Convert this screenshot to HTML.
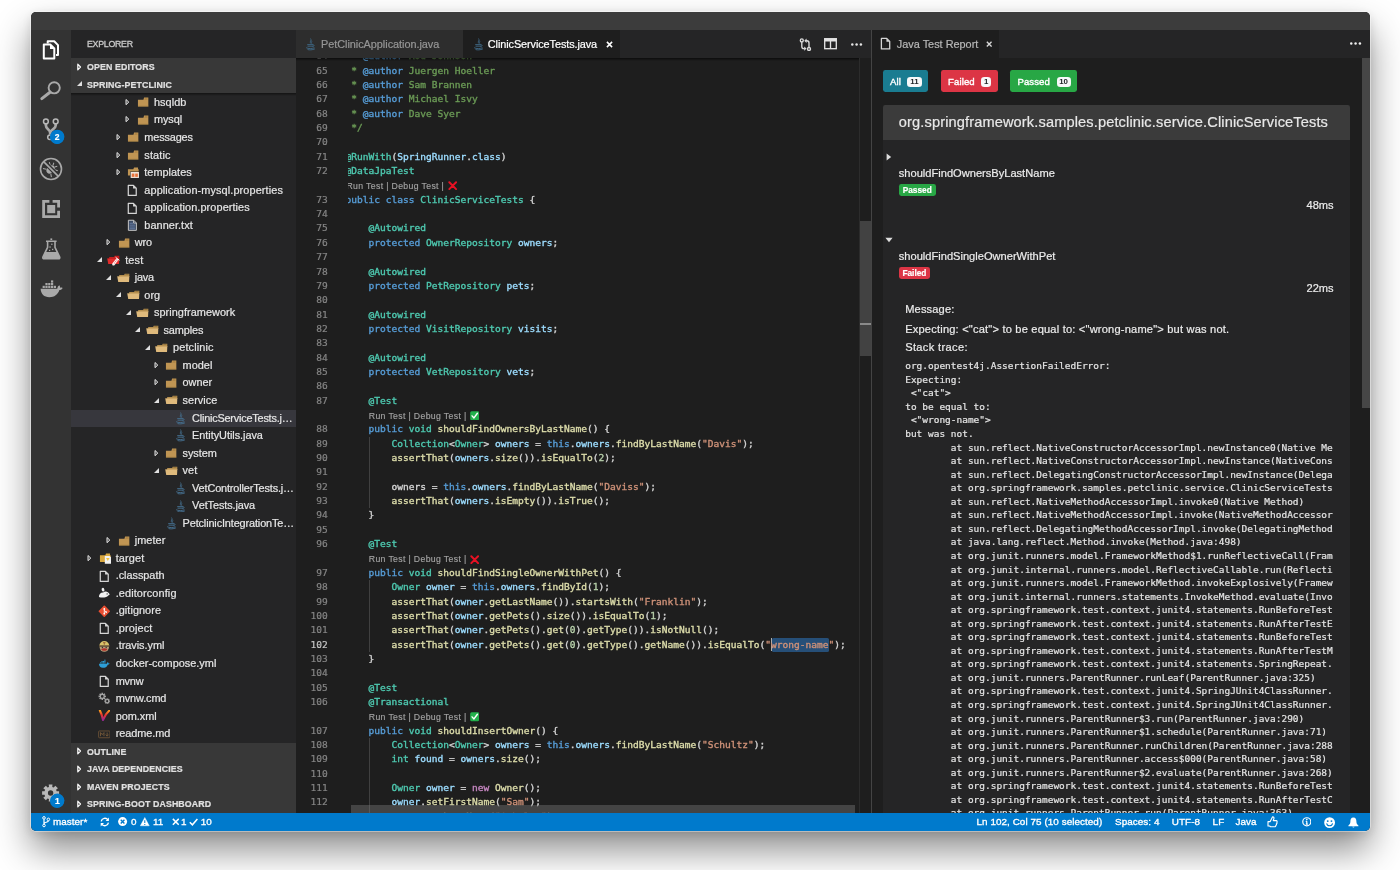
<!DOCTYPE html>
<html lang="en"><head><meta charset="utf-8"><title>spring-petclinic - Visual Studio Code</title>
<style>
*{box-sizing:border-box;margin:0;padding:0}
html,body{width:1400px;height:870px;overflow:hidden;background:#fff}
body{position:relative;font-family:"Liberation Sans",sans-serif;font-size:10.4px;color:#ccc}
.abs{position:absolute}
#all{position:absolute;left:0;top:0;width:1400px;height:870px;will-change:transform;-webkit-text-stroke:.2px}
#frame{position:absolute;left:31px;top:12px;width:1339px;height:819px;border-radius:5px;background:#1e1e1e;
 box-shadow:0 0 0 .8px rgba(255,255,255,.5),0 19px 36px rgba(0,0,0,.45),0 3px 12px rgba(0,0,0,.12)}
#title{position:absolute;left:31px;top:12px;width:1339px;height:18px;background:#3c3c3c;border-radius:5px 5px 0 0}
#act{position:absolute;left:31px;top:30px;width:40px;height:783px;background:#333}
#act svg{position:absolute}
.badge{position:absolute;width:14px;height:14px;border-radius:7px;background:#007acc;color:#fff;font-size:8.5px;font-weight:bold;text-align:center;line-height:14px}
#side{position:absolute;left:71px;top:30px;width:225px;height:783px;background:#252526;overflow:hidden}
#side .ttl{position:absolute;left:16px;top:0;height:28px;line-height:28.6px;font-size:8.8px;color:#cacaca;letter-spacing:-.27px;-webkit-text-stroke:.3px}
.sec{position:absolute;left:0;width:225px;height:17.6px;background:#383838;line-height:18.6px;font-size:8.8px;font-weight:bold;color:#e0e0e0;padding-left:16px;letter-spacing:.12px;white-space:nowrap}
.sec svg{position:absolute;left:4px;top:4.5px}
.row{position:absolute;left:0;width:225px;height:17.54px;line-height:17.54px;white-space:nowrap;color:#e6e6e6;font-size:10.9px;letter-spacing:.1px}
.row.sel{background:#37373d}
.row svg{position:absolute}
.row span{position:absolute;top:0}
#tabs{position:absolute;left:296px;top:30px;width:575px;height:28px;background:#252526}
#tabs svg{position:absolute}
.tab{position:absolute;top:0;height:28px;background:#2d2d2d;line-height:29.6px;font-size:10.9px;color:#969696;white-space:nowrap}
.tab.on{background:#1e1e1e;color:#fff}
.tab span{position:absolute;top:0}
#ed{position:absolute;left:296px;top:58px;width:575px;height:755px;background:#1e1e1e;overflow:hidden}
#code{-webkit-text-stroke:.36px;position:absolute;left:52px;top:0;width:511px;height:755px;overflow:hidden}
.ln,.num,.cl{position:absolute;height:14.35px;line-height:14.35px;white-space:pre}
.ln{left:0;width:560px;font-family:"DejaVu Sans Mono","Liberation Mono",monospace;font-size:9.56px;color:#d4d4d4}
.ln span{position:absolute;top:0}
.ln i,.cl i{font-style:normal}
.num{left:0;width:31.8px;text-align:right;font-family:"DejaVu Sans Mono","Liberation Mono",monospace;font-size:9.56px;color:#858585}
.num.nc{color:#c6c6c6}
.cl{font-family:"Liberation Sans",sans-serif;font-size:8.7px;color:#a2a2a2;letter-spacing:.35px;padding-top:.8px;-webkit-text-stroke:.15px}
.cli{position:relative;top:1.6px;margin-left:.6px}
.k{color:#569cd6}.t{color:#4ec9b0}.v{color:#9cdcfe}.f{color:#dcdcaa}.s{color:#ce9178}.n{color:#b5cea8}.c{color:#6a9955}.d{color:#569cd6}.p{color:#c586c0}
.selr{position:absolute;top:0;height:14.35px;background:#264f78;border-radius:1.6px}
.cur{position:absolute;top:.6px;width:1.4px;height:13.2px;background:#aeafad}
.ig{position:absolute;top:0;width:1px;height:14.35px;background:#404040}
#rtabs{position:absolute;left:872px;top:30px;width:498px;height:28px;background:#252526}
#rtabs svg{position:absolute}
#rp{position:absolute;left:872px;top:58px;width:498px;height:755px;background:#1e1e1e;overflow:hidden;color:#ececec;font-size:11.1px}
.btn{position:absolute;top:12px;height:22px;border-radius:2.4px;color:#fff;font-size:9.55px;line-height:23.4px;white-space:nowrap;letter-spacing:.1px}
.btn .bl{position:absolute;left:7.1px;top:0;-webkit-text-stroke:.38px}
.btn .bb{position:absolute;right:6.8px;top:7px;height:9.6px;line-height:9.8px;border-radius:3.3px;background:#f8f9fa;color:#212529;font-size:7.9px;font-weight:bold;-webkit-text-stroke:0;text-align:center;letter-spacing:0}
#card{position:absolute;left:11px;top:46.8px;width:467px;height:720px;background:#252526;border-radius:2.4px}
#chead{position:absolute;left:0;top:0;width:467px;height:35px;background:#3b3b3b;border-radius:2.4px 2.4px 0 0;line-height:35px;font-size:14.6px;color:#e8e8e8;white-space:nowrap;letter-spacing:.13px}
#chead span{position:absolute;left:15.8px;top:0}
.tn,.msg,.ms{position:absolute;height:16px;line-height:16px;white-space:nowrap}
.tn{left:26.8px}
.tb{position:absolute;left:26.8px;height:12.6px;line-height:12.8px;border-radius:2.4px;color:#fff;font-size:8.3px;font-weight:bold;text-align:center}
.ms{right:36.4px;text-align:right;margin-top:-.6px}
.msg{left:33.2px;letter-spacing:.15px}
#st{position:absolute;left:33.2px;top:301.3px;width:427.8px;height:460px;overflow:hidden;font-family:"DejaVu Sans Mono","Liberation Mono",monospace;font-size:9.47px;line-height:13.55px;color:#e4e4e4;white-space:pre}
#status{-webkit-text-stroke:.32px;position:absolute;left:31px;top:813px;width:1339px;height:18px;background:#007acc;border-radius:0 0 5px 5px;color:#fff;font-size:9.9px;line-height:18px;white-space:nowrap;letter-spacing:.06px}
#status span{position:absolute;top:0}
#status svg{position:absolute}

</style></head>
<body>
<div id="all">
<div id="frame"></div>
<div id="title"></div>
<div id="act"><svg style="left:0;top:0" width="40" height="783" viewBox="31 30 40 783"><g fill="none" stroke="#fff" stroke-width="2" stroke-linejoin="round"><path d="M47.7 43.4 V41.3 H54.2 L58 45.1 V55 H56"/><path d="M43.8 44.6 H50.5 L54.3 48.4 V58.5 H43.8 Z"/></g><path d="M50 44.2 L54.700 48.900 H50Z" fill="#fff"/><g fill="none" stroke="#a9a9a9"><circle cx="54.2" cy="87.8" r="5.6" stroke-width="1.9"/><path d="M50 92.2 L41.8 98.6" stroke-width="3" stroke-linecap="round"/></g><path d="M45.9 123.6 V125.6 C45.9 129.4 50.2 129.2 50.2 133 V134.6 M55.7 123.6 V125.6 C55.7 129.4 50.2 129.2 50.2 133" fill="none" stroke="#a9a9a9" stroke-width="2.7"/><g fill="#333" stroke="#b8b8b8" stroke-width="1.5"><circle cx="45.9" cy="121.4" r="2.4"/><circle cx="55.7" cy="121.4" r="2.4"/><circle cx="50" cy="137.2" r="2.3"/></g><circle cx="57.3" cy="136.8" r="7.1" fill="#007acc"/><g transform="rotate(45 51 169)"><ellipse cx="51" cy="169.6" rx="3.3" ry="4.7" fill="#a9a9a9"/><path d="M47.9 167 L45 165.4 M47.6 169.8 H44.2 M47.9 172.4 L45 174.4 M54.1 167 L57 165.4 M54.4 169.8 H57.8 M54.1 172.4 L57 174.4 M49.8 165 L48.6 162.6 M52.2 165 L53.4 162.6" fill="none" stroke="#a9a9a9" stroke-width="1.05"/></g><path d="M44.2 162 L58.200 176" stroke="#333" stroke-width="4.2"/><g fill="none" stroke="#a9a9a9"><circle cx="51" cy="169" r="10.5" stroke-width="1.6"/><path d="M43.600 161.600 L58.400 176.400" stroke-width="1.6"/></g><g fill="#a9a9a9"><path d="M42.2 200 H49.4 V202.8 H45 V215.2 H57.2 V210.8 H60 V218 H42.2 Z"/><path d="M52.6 200 H60 V207.6 H57.2 V202.8 H52.6 Z"/><rect x="47.2" y="205" width="8" height="8.2"/></g><g><path d="M46 241.2 H56.6 M47.6 241.2 V247.4 L43 256.8 Q42.2 258.8 44.4 258.8 H58.2 Q60.4 258.8 59.6 256.8 L55 247.4 V241.2" fill="none" stroke="#a9a9a9" stroke-width="1.6" stroke-linejoin="round"/><path d="M45.2 252 H57.4 L59.4 256.8 Q59.8 258.6 58.2 258.6 H44.4 Q42.8 258.6 43.2 256.8 Z" fill="#a9a9a9"/><rect x="50.4" y="238.4" width="1.8" height="1.6" fill="#a9a9a9"/><rect x="51.2" y="243.6" width="1.3" height="1.3" fill="#a9a9a9"/><rect x="49.4" y="246.4" width="1.3" height="1.3" fill="#a9a9a9"/><rect x="52" y="248.8" width="1.3" height="1.3" fill="#a9a9a9"/><rect x="49" y="249.8" width="1.2" height="1.2" fill="#a9a9a9"/></g><g fill="#a9a9a9"><path d="M40.6 288.8 H57.2 C57.6 286.6 58.6 285.6 59.4 285.2 C60 286 60.2 287 60 287.8 C61 287.4 62 287.6 62.6 288 C62 289.4 60.8 290 59.4 290 C57.8 294.6 54.4 297.2 49.4 297.2 C44 297.2 41 294.2 40.6 288.8 Z"/><rect x="42.6" y="285.8" width="2.2" height="2.2"/><rect x="45.4" y="285.8" width="2.2" height="2.2"/><rect x="48.2" y="285.8" width="2.2" height="2.2"/><rect x="51" y="285.8" width="2.2" height="2.2"/><rect x="53.8" y="285.8" width="2.2" height="2.2"/><rect x="45.4" y="283" width="2.2" height="2.2"/><rect x="48.2" y="283" width="2.2" height="2.2"/><rect x="51" y="283" width="2.2" height="2.2"/><rect x="51" y="280.4" width="2.2" height="2.2"/></g><path d="M59.10 791.14 L59.10 794.86 L56.68 794.64 L56.06 796.14 L57.93 797.69 L55.29 800.33 L53.74 798.46 L52.24 799.08 L52.46 801.50 L48.74 801.50 L48.96 799.08 L47.46 798.46 L45.91 800.33 L43.27 797.69 L45.14 796.14 L44.52 794.64 L42.10 794.86 L42.10 791.14 L44.52 791.36 L45.14 789.86 L43.27 788.31 L45.91 785.67 L47.46 787.54 L48.96 786.92 L48.74 784.50 L52.46 784.50 L52.24 786.92 L53.74 787.54 L55.29 785.67 L57.93 788.31 L56.06 789.86 L56.68 791.36Z M53.30 793.00 A2.7 2.7 0 1 0 47.90 793.00 A2.7 2.7 0 1 0 53.30 793.00Z" fill="#b9b9b9" fill-rule="evenodd"/><circle cx="57.4" cy="800.6" r="7" fill="#007acc"/></svg><div class="badge" style="left:19.2px;top:99.8px">2</div><div class="badge" style="left:19.4px;top:763.6px">1</div></div>
<div id="side"><div class="ttl">EXPLORER</div><div class="sec" style="top:28.00px"><svg style="left:5.6px;top:4.6px" width="6" height="8" viewBox="0 0 6 8"><path d="M.8 1.1 L3.5 4 L.8 6.9 Z" fill="none" stroke="#f6f6f6" stroke-width="1.25" stroke-linejoin="round"/></svg>OPEN EDITORS</div><div class="sec" style="top:45.54px"><svg style="left:4.8px;top:4.6px" width="7" height="7" viewBox="0 0 7 7"><path d="M6 1 V6 H1 Z" fill="#e0e0e0"/></svg>SPRING-PETCLINIC</div><div class="row" style="top:63.90px"><svg style="left:54.4px;top:4.0px" width="6" height="8" viewBox="0 0 6 8"><path d="M1 1.5 L3.800 4.100 L1 6.700 Z" fill="rgba(255,255,255,.18)" stroke="#e4e4e4" stroke-width="1" stroke-linejoin="round"/></svg><svg style="left:65.7px;top:2.4px" width="12.6" height="12.6" viewBox="0 0 16 16"><path d="M1.2 13.2 V4.8 H8.2 L9 2 H14.4 V13.2 Z" fill="#c09553"/><path d="M9.4 4.6 L9.9 3.1 H13.4 V4.6Z" fill="#a07a3c"/><path d="M1.2 12.4 H14.4 V13.2 H1.2Z" fill="#a98445"/></svg><span style="left:82.9px;letter-spacing:0.08px">hsqldb</span></div><div class="row" style="top:81.44px"><svg style="left:54.4px;top:4.0px" width="6" height="8" viewBox="0 0 6 8"><path d="M1 1.5 L3.800 4.100 L1 6.700 Z" fill="rgba(255,255,255,.18)" stroke="#e4e4e4" stroke-width="1" stroke-linejoin="round"/></svg><svg style="left:65.7px;top:2.4px" width="12.6" height="12.6" viewBox="0 0 16 16"><path d="M1.2 13.2 V4.8 H8.2 L9 2 H14.4 V13.2 Z" fill="#c09553"/><path d="M9.4 4.6 L9.9 3.1 H13.4 V4.6Z" fill="#a07a3c"/><path d="M1.2 12.4 H14.4 V13.2 H1.2Z" fill="#a98445"/></svg><span style="left:82.9px;letter-spacing:-0.05px">mysql</span></div><div class="row" style="top:98.97px"><svg style="left:44.8px;top:4.0px" width="6" height="8" viewBox="0 0 6 8"><path d="M1 1.5 L3.800 4.100 L1 6.700 Z" fill="rgba(255,255,255,.18)" stroke="#e4e4e4" stroke-width="1" stroke-linejoin="round"/></svg><svg style="left:56.1px;top:2.4px" width="12.6" height="12.6" viewBox="0 0 16 16"><path d="M1.2 13.2 V4.8 H8.2 L9 2 H14.4 V13.2 Z" fill="#c09553"/><path d="M9.4 4.6 L9.9 3.1 H13.4 V4.6Z" fill="#a07a3c"/><path d="M1.2 12.4 H14.4 V13.2 H1.2Z" fill="#a98445"/></svg><span style="left:73.3px;letter-spacing:-0.14px">messages</span></div><div class="row" style="top:116.50px"><svg style="left:44.8px;top:4.0px" width="6" height="8" viewBox="0 0 6 8"><path d="M1 1.5 L3.800 4.100 L1 6.700 Z" fill="rgba(255,255,255,.18)" stroke="#e4e4e4" stroke-width="1" stroke-linejoin="round"/></svg><svg style="left:56.1px;top:2.4px" width="12.6" height="12.6" viewBox="0 0 16 16"><path d="M1.2 13.2 V4.8 H8.2 L9 2 H14.4 V13.2 Z" fill="#c09553"/><path d="M9.4 4.6 L9.9 3.1 H13.4 V4.6Z" fill="#a07a3c"/><path d="M1.2 12.4 H14.4 V13.2 H1.2Z" fill="#a98445"/></svg><span style="left:73.3px;letter-spacing:0.16px">static</span></div><div class="row" style="top:134.04px"><svg style="left:44.8px;top:4.0px" width="6" height="8" viewBox="0 0 6 8"><path d="M1 1.5 L3.800 4.100 L1 6.700 Z" fill="rgba(255,255,255,.18)" stroke="#e4e4e4" stroke-width="1" stroke-linejoin="round"/></svg><svg style="left:56.1px;top:2.4px" width="12.6" height="12.6" viewBox="0 0 16 16"><path d="M1.2 12 V4 H8 L9 2 H14 V4 H14.8 V7 H4 V12 Z" fill="#c09553"/><rect x="4.6" y="7.6" width="10.6" height="7.6" fill="#f0e6dc"/><rect x="6" y="9.6" width="3.4" height="4.2" fill="#e8743b"/><rect x="10.4" y="9.6" width="3.4" height="4.2" fill="#e8743b"/></svg><span style="left:73.3px;letter-spacing:0.02px">templates</span></div><div class="row" style="top:151.57px"><svg style="left:55.2px;top:2.4px" width="12.6" height="12.6" viewBox="0 0 16 16"><path d="M2.9 1.7 H9.4 L13 5.3 V14.5 H2.9 Z" fill="none" stroke="#d6d6d6" stroke-width="1.55" stroke-linejoin="round"/><path d="M9 1.6 L13.2 5.8 H9Z" fill="#d6d6d6"/></svg><span style="left:73.3px;letter-spacing:0.11px">application-mysql.properties</span></div><div class="row" style="top:169.11px"><svg style="left:55.2px;top:2.4px" width="12.6" height="12.6" viewBox="0 0 16 16"><path d="M2.9 1.7 H9.4 L13 5.3 V14.5 H2.9 Z" fill="none" stroke="#d6d6d6" stroke-width="1.55" stroke-linejoin="round"/><path d="M9 1.6 L13.2 5.8 H9Z" fill="#d6d6d6"/></svg><span style="left:73.3px;letter-spacing:0.09px">application.properties</span></div><div class="row" style="top:186.65px"><svg style="left:55.2px;top:2.4px" width="12.6" height="12.6" viewBox="0 0 16 16"><path d="M3 1.6 H9.8 L13.2 5 V14.4 H3 Z" fill="#3b4a63" stroke="#c8c8c8" stroke-width="1.25" stroke-linejoin="round"/><path d="M4.6 5.4 H9 M4.6 7.8 H11.4 M4.6 10.2 H11.4 M4.6 12.4 H11.4" stroke="#6e84ad" stroke-width="1.1"/><path d="M9.6 1.8 V5.2 H13" fill="none" stroke="#c8c8c8" stroke-width="1.1"/></svg><span style="left:73.3px;letter-spacing:0.07px">banner.txt</span></div><div class="row" style="top:204.18px"><svg style="left:35.3px;top:4.0px" width="6" height="8" viewBox="0 0 6 8"><path d="M1 1.5 L3.800 4.100 L1 6.700 Z" fill="rgba(255,255,255,.18)" stroke="#e4e4e4" stroke-width="1" stroke-linejoin="round"/></svg><svg style="left:46.6px;top:2.4px" width="12.6" height="12.6" viewBox="0 0 16 16"><path d="M1.2 13.2 V4.8 H8.2 L9 2 H14.4 V13.2 Z" fill="#c09553"/><path d="M9.4 4.6 L9.9 3.1 H13.4 V4.6Z" fill="#a07a3c"/><path d="M1.2 12.4 H14.4 V13.2 H1.2Z" fill="#a98445"/></svg><span style="left:63.8px;letter-spacing:-0.11px">wro</span></div><div class="row" style="top:221.72px"><svg style="left:24.8px;top:4.6px" width="7" height="7" viewBox="0 0 7 7"><path d="M6 1 V6 H1 Z" fill="#e0e0e0"/></svg><svg width="14.2" height="12.6" viewBox="-2 0 18 16" style="left:37.0px;top:2.4px;margin-left:-1.6px"><path d="M2 6.4 V3.9 H8.4 L9 2.2 H14.9 V6.4Z" fill="#c41f1f"/><path d="M-.4 5.8 H14.9 L14.5 12.7 H.8Z" fill="#e22b2b"/><path d="M-.4 5.8 H14.9 V6.5 H-.3Z" fill="#b81c1c"/><path d="M6 12.2 L11.4 5.4 L14 7.4 L8.8 14.2 Q7.200 15 6.200 14.2 Q5.400 13.200 6 12.2Z" fill="#fff" opacity=".93"/><path d="M10.200 4.200 L15 8" stroke="#fff" stroke-width="1.2"/><path d="M8.200 11 L9.800 12.2 M9.600 9.200 L11.200 10.4 M11 7.400 L12.600 8.600" stroke="#e22b2b" stroke-width=".7"/></svg><span style="left:54.2px;letter-spacing:0.15px">test</span></div><div class="row" style="top:239.25px"><svg style="left:34.4px;top:4.6px" width="7" height="7" viewBox="0 0 7 7"><path d="M6 1 V6 H1 Z" fill="#e0e0e0"/></svg><svg width="14.2" height="12.6" viewBox="-2 0 18 16" style="left:46.6px;top:2.4px;margin-left:-1.6px"><path d="M2 6.4 V3.9 H8.4 L9 2.2 H14.9 V6.4Z" fill="#b58f4f"/><path d="M9.6 3.9 L10 3 H14 V3.9Z" fill="#8f6f38"/><path d="M-.4 5.8 H14.9 L14.5 12.7 H.8Z" fill="#dfba7c"/><path d="M-.4 5.8 H14.9 V6.5 H-.3Z" fill="#c9a466"/></svg><span style="left:63.8px;letter-spacing:-0.25px">java</span></div><div class="row" style="top:256.78px"><svg style="left:43.9px;top:4.6px" width="7" height="7" viewBox="0 0 7 7"><path d="M6 1 V6 H1 Z" fill="#e0e0e0"/></svg><svg width="14.2" height="12.6" viewBox="-2 0 18 16" style="left:56.1px;top:2.4px;margin-left:-1.6px"><path d="M2 6.4 V3.9 H8.4 L9 2.2 H14.9 V6.4Z" fill="#b58f4f"/><path d="M9.6 3.9 L10 3 H14 V3.9Z" fill="#8f6f38"/><path d="M-.4 5.8 H14.9 L14.5 12.7 H.8Z" fill="#dfba7c"/><path d="M-.4 5.8 H14.9 V6.5 H-.3Z" fill="#c9a466"/></svg><span style="left:73.3px;letter-spacing:0.07px">org</span></div><div class="row" style="top:274.32px"><svg style="left:53.5px;top:4.6px" width="7" height="7" viewBox="0 0 7 7"><path d="M6 1 V6 H1 Z" fill="#e0e0e0"/></svg><svg width="14.2" height="12.6" viewBox="-2 0 18 16" style="left:65.7px;top:2.4px;margin-left:-1.6px"><path d="M2 6.4 V3.9 H8.4 L9 2.2 H14.9 V6.4Z" fill="#b58f4f"/><path d="M9.6 3.9 L10 3 H14 V3.9Z" fill="#8f6f38"/><path d="M-.4 5.8 H14.9 L14.5 12.7 H.8Z" fill="#dfba7c"/><path d="M-.4 5.8 H14.9 V6.5 H-.3Z" fill="#c9a466"/></svg><span style="left:82.9px;letter-spacing:0.06px">springframework</span></div><div class="row" style="top:291.86px"><svg style="left:63.1px;top:4.6px" width="7" height="7" viewBox="0 0 7 7"><path d="M6 1 V6 H1 Z" fill="#e0e0e0"/></svg><svg width="14.2" height="12.6" viewBox="-2 0 18 16" style="left:75.3px;top:2.4px;margin-left:-1.6px"><path d="M2 6.4 V3.9 H8.4 L9 2.2 H14.9 V6.4Z" fill="#b58f4f"/><path d="M9.6 3.9 L10 3 H14 V3.9Z" fill="#8f6f38"/><path d="M-.4 5.8 H14.9 L14.5 12.7 H.8Z" fill="#dfba7c"/><path d="M-.4 5.8 H14.9 V6.5 H-.3Z" fill="#c9a466"/></svg><span style="left:92.5px;letter-spacing:-0.09px">samples</span></div><div class="row" style="top:309.39px"><svg style="left:72.6px;top:4.6px" width="7" height="7" viewBox="0 0 7 7"><path d="M6 1 V6 H1 Z" fill="#e0e0e0"/></svg><svg width="14.2" height="12.6" viewBox="-2 0 18 16" style="left:84.8px;top:2.4px;margin-left:-1.6px"><path d="M2 6.4 V3.9 H8.4 L9 2.2 H14.9 V6.4Z" fill="#b58f4f"/><path d="M9.6 3.9 L10 3 H14 V3.9Z" fill="#8f6f38"/><path d="M-.4 5.8 H14.9 L14.5 12.7 H.8Z" fill="#dfba7c"/><path d="M-.4 5.8 H14.9 V6.5 H-.3Z" fill="#c9a466"/></svg><span style="left:102.0px;letter-spacing:0.14px">petclinic</span></div><div class="row" style="top:326.92px"><svg style="left:83.1px;top:4.0px" width="6" height="8" viewBox="0 0 6 8"><path d="M1 1.5 L3.800 4.100 L1 6.700 Z" fill="rgba(255,255,255,.18)" stroke="#e4e4e4" stroke-width="1" stroke-linejoin="round"/></svg><svg style="left:94.4px;top:2.4px" width="12.6" height="12.6" viewBox="0 0 16 16"><path d="M1.2 13.2 V4.8 H8.2 L9 2 H14.4 V13.2 Z" fill="#c09553"/><path d="M9.4 4.6 L9.9 3.1 H13.4 V4.6Z" fill="#a07a3c"/><path d="M1.2 12.4 H14.4 V13.2 H1.2Z" fill="#a98445"/></svg><span style="left:111.6px;letter-spacing:0.03px">model</span></div><div class="row" style="top:344.46px"><svg style="left:83.1px;top:4.0px" width="6" height="8" viewBox="0 0 6 8"><path d="M1 1.5 L3.800 4.100 L1 6.700 Z" fill="rgba(255,255,255,.18)" stroke="#e4e4e4" stroke-width="1" stroke-linejoin="round"/></svg><svg style="left:94.4px;top:2.4px" width="12.6" height="12.6" viewBox="0 0 16 16"><path d="M1.2 13.2 V4.8 H8.2 L9 2 H14.4 V13.2 Z" fill="#c09553"/><path d="M9.4 4.6 L9.9 3.1 H13.4 V4.6Z" fill="#a07a3c"/><path d="M1.2 12.4 H14.4 V13.2 H1.2Z" fill="#a98445"/></svg><span style="left:111.6px;letter-spacing:-0.05px">owner</span></div><div class="row" style="top:362.00px"><svg style="left:82.2px;top:4.6px" width="7" height="7" viewBox="0 0 7 7"><path d="M6 1 V6 H1 Z" fill="#e0e0e0"/></svg><svg width="14.2" height="12.6" viewBox="-2 0 18 16" style="left:94.4px;top:2.4px;margin-left:-1.6px"><path d="M2 6.4 V3.9 H8.4 L9 2.2 H14.9 V6.4Z" fill="#b58f4f"/><path d="M9.6 3.9 L10 3 H14 V3.9Z" fill="#8f6f38"/><path d="M-.4 5.8 H14.9 L14.5 12.7 H.8Z" fill="#dfba7c"/><path d="M-.4 5.8 H14.9 V6.5 H-.3Z" fill="#c9a466"/></svg><span style="left:111.6px;letter-spacing:0.02px">service</span></div><div class="row sel" style="top:379.53px"><svg style="left:103.0px;top:2.4px" width="12.6" height="12.6" viewBox="0 0 16 16"><g fill="none" stroke="#456f8e" stroke-linecap="round"><path d="M8.6 1 C10.4 3 6.4 4.4 8.2 6.6 M9.8 3.6 C10.6 4.8 8.8 5.4 9.6 6.8" stroke-width="1.0"/><path d="M4.6 8.4 H11.4 M5 10.4 H11 M11.6 8.8 C13.6 8.6 13.2 10.8 11.2 11" stroke-width="1.2"/><path d="M3.2 12.6 C5 13.8 11 13.8 12.8 12.6 M5 14.8 C7 15.4 10.4 15.2 13.4 14" stroke-width="1.2"/></g></svg><span style="left:121.1px;letter-spacing:-0.21px">ClinicServiceTests.j…</span></div><div class="row" style="top:397.06px"><svg style="left:103.0px;top:2.4px" width="12.6" height="12.6" viewBox="0 0 16 16"><g fill="none" stroke="#456f8e" stroke-linecap="round"><path d="M8.6 1 C10.4 3 6.4 4.4 8.2 6.6 M9.8 3.6 C10.6 4.8 8.8 5.4 9.6 6.8" stroke-width="1.0"/><path d="M4.6 8.4 H11.4 M5 10.4 H11 M11.6 8.8 C13.6 8.6 13.2 10.8 11.2 11" stroke-width="1.2"/><path d="M3.2 12.6 C5 13.8 11 13.8 12.8 12.6 M5 14.8 C7 15.4 10.4 15.2 13.4 14" stroke-width="1.2"/></g></svg><span style="left:121.1px;letter-spacing:-0.04px">EntityUtils.java</span></div><div class="row" style="top:414.60px"><svg style="left:83.1px;top:4.0px" width="6" height="8" viewBox="0 0 6 8"><path d="M1 1.5 L3.800 4.100 L1 6.700 Z" fill="rgba(255,255,255,.18)" stroke="#e4e4e4" stroke-width="1" stroke-linejoin="round"/></svg><svg style="left:94.4px;top:2.4px" width="12.6" height="12.6" viewBox="0 0 16 16"><path d="M1.2 13.2 V4.8 H8.2 L9 2 H14.4 V13.2 Z" fill="#c09553"/><path d="M9.4 4.6 L9.9 3.1 H13.4 V4.6Z" fill="#a07a3c"/><path d="M1.2 12.4 H14.4 V13.2 H1.2Z" fill="#a98445"/></svg><span style="left:111.6px;letter-spacing:-0.06px">system</span></div><div class="row" style="top:432.13px"><svg style="left:82.2px;top:4.6px" width="7" height="7" viewBox="0 0 7 7"><path d="M6 1 V6 H1 Z" fill="#e0e0e0"/></svg><svg width="14.2" height="12.6" viewBox="-2 0 18 16" style="left:94.4px;top:2.4px;margin-left:-1.6px"><path d="M2 6.4 V3.9 H8.4 L9 2.2 H14.9 V6.4Z" fill="#b58f4f"/><path d="M9.6 3.9 L10 3 H14 V3.9Z" fill="#8f6f38"/><path d="M-.4 5.8 H14.9 L14.5 12.7 H.8Z" fill="#dfba7c"/><path d="M-.4 5.8 H14.9 V6.5 H-.3Z" fill="#c9a466"/></svg><span style="left:111.6px;letter-spacing:0.03px">vet</span></div><div class="row" style="top:449.67px"><svg style="left:103.0px;top:2.4px" width="12.6" height="12.6" viewBox="0 0 16 16"><g fill="none" stroke="#456f8e" stroke-linecap="round"><path d="M8.6 1 C10.4 3 6.4 4.4 8.2 6.6 M9.8 3.6 C10.6 4.8 8.8 5.4 9.6 6.8" stroke-width="1.0"/><path d="M4.6 8.4 H11.4 M5 10.4 H11 M11.6 8.8 C13.6 8.6 13.2 10.8 11.2 11" stroke-width="1.2"/><path d="M3.2 12.6 C5 13.8 11 13.8 12.8 12.6 M5 14.8 C7 15.4 10.4 15.2 13.4 14" stroke-width="1.2"/></g></svg><span style="left:121.1px;letter-spacing:-0.14px">VetControllerTests.j…</span></div><div class="row" style="top:467.20px"><svg style="left:103.0px;top:2.4px" width="12.6" height="12.6" viewBox="0 0 16 16"><g fill="none" stroke="#456f8e" stroke-linecap="round"><path d="M8.6 1 C10.4 3 6.4 4.4 8.2 6.6 M9.8 3.6 C10.6 4.8 8.8 5.4 9.6 6.8" stroke-width="1.0"/><path d="M4.6 8.4 H11.4 M5 10.4 H11 M11.6 8.8 C13.6 8.6 13.2 10.8 11.2 11" stroke-width="1.2"/><path d="M3.2 12.6 C5 13.8 11 13.8 12.8 12.6 M5 14.8 C7 15.4 10.4 15.2 13.4 14" stroke-width="1.2"/></g></svg><span style="left:121.1px;letter-spacing:-0.09px">VetTests.java</span></div><div class="row" style="top:484.74px"><svg style="left:93.5px;top:2.4px" width="12.6" height="12.6" viewBox="0 0 16 16"><g fill="none" stroke="#456f8e" stroke-linecap="round"><path d="M8.6 1 C10.4 3 6.4 4.4 8.2 6.6 M9.8 3.6 C10.6 4.8 8.8 5.4 9.6 6.8" stroke-width="1.0"/><path d="M4.6 8.4 H11.4 M5 10.4 H11 M11.6 8.8 C13.6 8.6 13.2 10.8 11.2 11" stroke-width="1.2"/><path d="M3.2 12.6 C5 13.8 11 13.8 12.8 12.6 M5 14.8 C7 15.4 10.4 15.2 13.4 14" stroke-width="1.2"/></g></svg><span style="left:111.6px;letter-spacing:-0.13px">PetclinicIntegrationTe…</span></div><div class="row" style="top:502.27px"><svg style="left:35.3px;top:4.0px" width="6" height="8" viewBox="0 0 6 8"><path d="M1 1.5 L3.800 4.100 L1 6.700 Z" fill="rgba(255,255,255,.18)" stroke="#e4e4e4" stroke-width="1" stroke-linejoin="round"/></svg><svg style="left:46.6px;top:2.4px" width="12.6" height="12.6" viewBox="0 0 16 16"><path d="M1.2 13.2 V4.8 H8.2 L9 2 H14.4 V13.2 Z" fill="#c09553"/><path d="M9.4 4.6 L9.9 3.1 H13.4 V4.6Z" fill="#a07a3c"/><path d="M1.2 12.4 H14.4 V13.2 H1.2Z" fill="#a98445"/></svg><span style="left:63.8px;letter-spacing:0.04px">jmeter</span></div><div class="row" style="top:519.81px"><svg style="left:16.2px;top:4.0px" width="6" height="8" viewBox="0 0 6 8"><path d="M1 1.5 L3.800 4.100 L1 6.700 Z" fill="rgba(255,255,255,.18)" stroke="#e4e4e4" stroke-width="1" stroke-linejoin="round"/></svg><svg style="left:27.5px;top:2.4px" width="12.6" height="12.6" viewBox="0 0 16 16"><path d="M1.2 12.6 V4 H8 L9 2 H14 V4 H14.8 V12.6 Z" fill="#d9a83f"/><path d="M7.4 5 H13.6 L15.6 7 V15 H7.4Z" fill="#f2f2f2"/><path d="M9 7.6 H13.4 L11.2 11.4Z" fill="#f5c33b"/></svg><span style="left:44.7px;letter-spacing:0.13px">target</span></div><div class="row" style="top:537.35px"><svg style="left:26.6px;top:2.4px" width="12.6" height="12.6" viewBox="0 0 16 16"><path d="M2.9 1.7 H9.4 L13 5.3 V14.5 H2.9 Z" fill="none" stroke="#d6d6d6" stroke-width="1.55" stroke-linejoin="round"/><path d="M9 1.6 L13.2 5.8 H9Z" fill="#d6d6d6"/></svg><span style="left:44.7px;letter-spacing:-0.03px">.classpath</span></div><div class="row" style="top:554.88px"><svg style="left:26.6px;top:2.4px" width="12.6" height="12.6" viewBox="0 0 16 16"><g fill="#f2f2f2"><path d="M1.2 12.8 C1 9 3.6 6.8 6.6 7 C9 4.6 13 5.6 14.6 9 C15 10 14.4 10.6 13.4 10.4 C11.8 13 6 14.4 1.2 12.8Z"/><ellipse cx="6.4" cy="3.4" rx="1.7" ry="2.4" transform="rotate(-20 6.4 3.4)"/></g><circle cx="11.6" cy="8.8" r=".8" fill="#252526"/></svg><span style="left:44.7px;letter-spacing:0.12px">.editorconfig</span></div><div class="row" style="top:572.41px"><svg style="left:26.6px;top:2.4px" width="12.6" height="12.6" viewBox="0 0 16 16"><rect x="2.6" y="2.6" width="10.8" height="10.8" rx="1" transform="rotate(45 8 8)" fill="#e84e31"/><path d="M8 4.6 V11.4 M8 6.6 L10.4 9" stroke="#fff" stroke-width="1.1"/><circle cx="8" cy="5" r="1.1" fill="#fff"/><circle cx="8" cy="11" r="1.1" fill="#fff"/><circle cx="10.4" cy="9" r="1.1" fill="#fff"/></svg><span style="left:44.7px;letter-spacing:0.05px">.gitignore</span></div><div class="row" style="top:589.95px"><svg style="left:26.6px;top:2.4px" width="12.6" height="12.6" viewBox="0 0 16 16"><path d="M2.9 1.7 H9.4 L13 5.3 V14.5 H2.9 Z" fill="none" stroke="#d6d6d6" stroke-width="1.55" stroke-linejoin="round"/><path d="M9 1.6 L13.2 5.8 H9Z" fill="#d6d6d6"/></svg><span style="left:44.7px;letter-spacing:0.13px">.project</span></div><div class="row" style="top:607.49px"><svg style="left:26.6px;top:2.4px" width="12.6" height="12.6" viewBox="0 0 16 16"><circle cx="8" cy="9" r="6" fill="#b89f78"/><path d="M1.6 7.4 C2 3.4 5 1.4 8 1.4 C11 1.4 14 3.4 14.4 7.4 Z" fill="#d8c36a"/><path d="M1.4 6.800 H14.6 V8.6 H1.4Z" fill="#5e4a32"/><path d="M4 11.4 C6 10 10 10 12 11.4 C11.4 14.6 4.6 14.6 4 11.4Z" fill="#b3332e"/><circle cx="5.6" cy="9.6" r=".9" fill="#333"/><circle cx="10.4" cy="9.6" r=".9" fill="#333"/><path d="M6.4 3.4 H9.6 M8 3.4 V6" stroke="#8a4b2a" stroke-width="1"/></svg><span style="left:44.7px;letter-spacing:-0.03px">.travis.yml</span></div><div class="row" style="top:625.02px"><svg style="left:26.6px;top:2.4px" width="12.6" height="12.6" viewBox="0 0 16 16"><g fill="#2d9fd8"><path d="M1.2 8.6 H11.2 C11.4 7.2 12 6.6 12.6 6.2 C13.2 6.9 13.2 7.6 13 8.1 C13.7 7.9 14.3 8.1 14.7 8.3 C14.3 9.4 13.4 9.8 12.4 9.8 C11.3 12.6 9.1 13.8 6.2 13.8 C3.1 13.8 1.4 12 1.2 8.6Z"/><rect x="2.6" y="6.8" width="1.5" height="1.4"/><rect x="4.4" y="6.8" width="1.5" height="1.4"/><rect x="6.2" y="6.8" width="1.5" height="1.4"/><rect x="8" y="6.8" width="1.5" height="1.4"/><rect x="4.4" y="5.1" width="1.5" height="1.4"/><rect x="6.2" y="5.1" width="1.5" height="1.4"/><rect x="8" y="5.1" width="1.5" height="1.4"/><rect x="8" y="3.4" width="1.5" height="1.4"/></g></svg><span style="left:44.7px;letter-spacing:0.01px">docker-compose.yml</span></div><div class="row" style="top:642.55px"><svg style="left:26.6px;top:2.4px" width="12.6" height="12.6" viewBox="0 0 16 16"><path d="M2.9 1.7 H9.4 L13 5.3 V14.5 H2.9 Z" fill="none" stroke="#d6d6d6" stroke-width="1.55" stroke-linejoin="round"/><path d="M9 1.6 L13.2 5.8 H9Z" fill="#d6d6d6"/></svg><span style="left:44.7px;letter-spacing:-0.18px">mvnw</span></div><div class="row" style="top:660.09px"><svg style="left:26.6px;top:2.4px" width="12.6" height="12.6" viewBox="0 0 16 16"><path d="M10.09 4.57 L10.09 6.63 L8.78 6.51 L8.43 7.35 L9.44 8.19 L7.99 9.64 L7.15 8.63 L6.31 8.98 L6.43 10.29 L4.37 10.29 L4.49 8.98 L3.65 8.63 L2.81 9.64 L1.36 8.19 L2.37 7.35 L2.02 6.51 L0.71 6.63 L0.71 4.57 L2.02 4.69 L2.37 3.85 L1.36 3.01 L2.81 1.56 L3.65 2.57 L4.49 2.22 L4.37 0.91 L6.43 0.91 L6.31 2.22 L7.15 2.57 L7.99 1.56 L9.44 3.01 L8.43 3.85 L8.78 4.69Z M7.10 5.60 A1.7 1.7 0 1 0 3.70 5.60 A1.7 1.7 0 1 0 7.10 5.60Z" fill="#a4a4a4" fill-rule="evenodd"/><path d="M15.31 10.79 L15.31 12.41 L14.21 12.30 L13.94 12.95 L14.80 13.65 L13.65 14.80 L12.95 13.94 L12.30 14.21 L12.41 15.31 L10.79 15.31 L10.90 14.21 L10.25 13.94 L9.55 14.80 L8.40 13.65 L9.26 12.95 L8.99 12.30 L7.89 12.41 L7.89 10.79 L8.99 10.90 L9.26 10.25 L8.40 9.55 L9.55 8.40 L10.25 9.26 L10.90 8.99 L10.79 7.89 L12.41 7.89 L12.30 8.99 L12.95 9.26 L13.65 8.40 L14.80 9.55 L13.94 10.25 L14.21 10.90Z M12.90 11.60 A1.3 1.3 0 1 0 10.30 11.60 A1.3 1.3 0 1 0 12.90 11.60Z" fill="#a4a4a4" fill-rule="evenodd"/></svg><span style="left:44.7px;letter-spacing:-0.10px">mvnw.cmd</span></div><div class="row" style="top:677.62px"><svg style="left:26.6px;top:2.4px" width="12.6" height="12.6" viewBox="0 0 16 16"><defs><linearGradient id="mvg" x1="0" y1="0" x2="0" y2="1"><stop offset="0" stop-color="#f99b1c"/><stop offset=".45" stop-color="#e8342b"/><stop offset="1" stop-color="#96288f"/></linearGradient></defs><path d="M2.4 .8 C4 3.600 5.400 8 6.400 12.600 C8.200 8 10.800 4 14.200 1" fill="none" stroke="url(#mvg)" stroke-width="2.7" stroke-linejoin="round" stroke-linecap="round"/></svg><span style="left:44.7px;letter-spacing:-0.02px">pom.xml</span></div><div class="row" style="top:695.16px"><svg style="left:26.6px;top:2.4px" width="12.6" height="12.6" viewBox="0 0 16 16"><rect x=".8" y="3.8" width="14.4" height="8.6" rx="1" fill="none" stroke="#755838" stroke-width="1"/><path d="M3.2 10.4 V5.8 L5.4 8.4 L7.6 5.8 V10.4 M11.6 5.8 V10 M9.8 8.4 L11.6 10.4 L13.4 8.4" fill="none" stroke="#755838" stroke-width="1.2"/></svg><span style="left:44.7px;letter-spacing:-0.07px">readme.md</span></div><div class="abs" style="left:0;top:63.1px;width:225px;height:3px;background:linear-gradient(rgba(0,0,0,.5),rgba(0,0,0,0))"></div><div class="sec" style="top:712.86px"><svg style="left:5.6px;top:4.6px" width="6" height="8" viewBox="0 0 6 8"><path d="M.8 1.1 L3.5 4 L.8 6.9 Z" fill="none" stroke="#f6f6f6" stroke-width="1.25" stroke-linejoin="round"/></svg>OUTLINE</div><div class="sec" style="top:730.39px"><svg style="left:5.6px;top:4.6px" width="6" height="8" viewBox="0 0 6 8"><path d="M.8 1.1 L3.5 4 L.8 6.9 Z" fill="none" stroke="#f6f6f6" stroke-width="1.25" stroke-linejoin="round"/></svg>JAVA DEPENDENCIES</div><div class="sec" style="top:747.93px"><svg style="left:5.6px;top:4.6px" width="6" height="8" viewBox="0 0 6 8"><path d="M.8 1.1 L3.5 4 L.8 6.9 Z" fill="none" stroke="#f6f6f6" stroke-width="1.25" stroke-linejoin="round"/></svg>MAVEN PROJECTS</div><div class="sec" style="top:765.47px"><svg style="left:5.6px;top:4.6px" width="6" height="8" viewBox="0 0 6 8"><path d="M.8 1.1 L3.5 4 L.8 6.9 Z" fill="none" stroke="#f6f6f6" stroke-width="1.25" stroke-linejoin="round"/></svg>SPRING-BOOT DASHBOARD</div></div>
<div id="tabs"><div class="tab" style="left:0;width:166.5px"><svg style="left:8.4px;top:8.0px" width="12.6" height="12.6" viewBox="0 0 16 16"><g fill="none" stroke="#3f6784" stroke-linecap="round"><path d="M8.6 1 C10.4 3 6.4 4.4 8.2 6.6 M9.8 3.6 C10.6 4.8 8.8 5.4 9.6 6.8" stroke-width="1.0"/><path d="M4.6 8.4 H11.4 M5 10.4 H11 M11.6 8.8 C13.6 8.6 13.2 10.8 11.2 11" stroke-width="1.2"/><path d="M3.2 12.6 C5 13.8 11 13.8 12.8 12.6 M5 14.8 C7 15.4 10.4 15.2 13.4 14" stroke-width="1.2"/></g></svg><span style="left:25px;letter-spacing:-0.04px">PetClinicApplication.java</span></div><div class="tab on" style="left:166.5px;width:157.5px"><svg style="left:9.0px;top:8.0px" width="12.6" height="12.6" viewBox="0 0 16 16"><g fill="none" stroke="#3f6784" stroke-linecap="round"><path d="M8.6 1 C10.4 3 6.4 4.4 8.2 6.6 M9.8 3.6 C10.6 4.8 8.8 5.4 9.6 6.8" stroke-width="1.0"/><path d="M4.6 8.4 H11.4 M5 10.4 H11 M11.6 8.8 C13.6 8.6 13.2 10.8 11.2 11" stroke-width="1.2"/><path d="M3.2 12.6 C5 13.8 11 13.8 12.8 12.6 M5 14.8 C7 15.4 10.4 15.2 13.4 14" stroke-width="1.2"/></g></svg><span style="left:25.3px;letter-spacing:-0.09px">ClinicServiceTests.java</span><svg style="left:143.2px;top:11px" width="7" height="7" viewBox="0 0 7 7"><path d="M.9 .9 L6.1 6.1 M6.1 .9 L.9 6.1" stroke="#fff" stroke-width="1.5"/></svg></div><svg style="left:503px;top:7.6px" width="13" height="13.4" viewBox="0 0 13 13.4"><g fill="none" stroke="#dcdcdc" stroke-width="1.35"><circle cx="2.8" cy="2.4" r="1.5"/><circle cx="10" cy="11" r="1.5"/><path d="M2.8 4 V8.400 Q2.800 10.6 5 10.6 H5.800 M10 9.400 V5 Q10 2.800 7.800 2.800 H7"/></g><path d="M5.200 8.400 L7.600 10.6 L5.200 12.8Z M7.600 .6 L5.200 2.800 L7.600 5Z" fill="#dcdcdc"/></svg><svg style="left:528.4px;top:8.4px" width="13" height="11.4" viewBox="0 0 13 11.4"><g fill="none" stroke="#e2e2e2"><rect x=".7" y=".7" width="11.6" height="10" stroke-width="1.35"/><path d="M.7 2.200 H12.300" stroke-width="2.6"/><path d="M6.500 2 V10.700" stroke-width="1.35"/></g></svg><svg style="left:555.4px;top:12.8px" width="11.4" height="3" viewBox="0 0 11.4 3"><g fill="#e6e6e6"><circle cx="1.300" cy="1.500" r="1.25"/><circle cx="5.600" cy="1.500" r="1.25"/><circle cx="9.900" cy="1.500" r="1.25"/></g></svg></div><div id="ed"><div id="code"><div class="ln" style="top:-8.75px"><span style="left:-2.4px"><i class="c"> * </i><i class="d">@author</i><i class="c"> Rod Johnson</i></span></div><div class="ln" style="top:5.60px"><span style="left:-2.4px"><i class="c"> * </i><i class="d">@author</i><i class="c"> Juergen Hoeller</i></span></div><div class="ln" style="top:19.95px"><span style="left:-2.4px"><i class="c"> * </i><i class="d">@author</i><i class="c"> Sam Brannen</i></span></div><div class="ln" style="top:34.30px"><span style="left:-2.4px"><i class="c"> * </i><i class="d">@author</i><i class="c"> Michael Isvy</i></span></div><div class="ln" style="top:48.65px"><span style="left:-2.4px"><i class="c"> * </i><i class="d">@author</i><i class="c"> Dave Syer</i></span></div><div class="ln" style="top:63.00px"><span style="left:-2.4px"><i class="c"> */</i></span></div><div class="ln" style="top:77.35px"><span style="left:-2.4px"></span></div><div class="ln" style="top:91.70px"><span style="left:-2.4px"><i class="t">@RunWith</i>(<i class="v">SpringRunner</i>.<i class="v">class</i>)</span></div><div class="ln" style="top:106.05px"><span style="left:-2.4px"><i class="t">@DataJpaTest</i></span></div><div class="cl" style="top:120.40px;left:-1.5px">Run Test | Debug Test | <svg class="cli" width="9.4" height="9.4" viewBox="0 0 10 10"><path d="M1.4 1.4 L8.6 8.6 M8.6 1.4 L1.4 8.6" stroke="#e81123" stroke-width="2.1" stroke-linecap="round"/></svg></div><div class="ln" style="top:134.75px"><span style="left:-2.4px"><i class="k">public</i> <i class="k">class</i> <i class="t">ClinicServiceTests</i> {</span></div><div class="ln" style="top:149.10px"><span style="left:-2.4px"></span></div><div class="ln" style="top:163.45px"><span style="left:-2.4px">    <i class="t">@Autowired</i></span></div><div class="ln" style="top:177.80px"><span style="left:-2.4px">    <i class="k">protected</i> <i class="t">OwnerRepository</i> <i class="v">owners</i>;</span></div><div class="ln" style="top:192.15px"><span style="left:-2.4px"></span></div><div class="ln" style="top:206.50px"><span style="left:-2.4px">    <i class="t">@Autowired</i></span></div><div class="ln" style="top:220.85px"><span style="left:-2.4px">    <i class="k">protected</i> <i class="t">PetRepository</i> <i class="v">pets</i>;</span></div><div class="ln" style="top:235.20px"><span style="left:-2.4px"></span></div><div class="ln" style="top:249.55px"><span style="left:-2.4px">    <i class="t">@Autowired</i></span></div><div class="ln" style="top:263.90px"><span style="left:-2.4px">    <i class="k">protected</i> <i class="t">VisitRepository</i> <i class="v">visits</i>;</span></div><div class="ln" style="top:278.25px"><span style="left:-2.4px"></span></div><div class="ln" style="top:292.60px"><span style="left:-2.4px">    <i class="t">@Autowired</i></span></div><div class="ln" style="top:306.95px"><span style="left:-2.4px">    <i class="k">protected</i> <i class="t">VetRepository</i> <i class="v">vets</i>;</span></div><div class="ln" style="top:321.30px"><span style="left:-2.4px"></span></div><div class="ln" style="top:335.65px"><span style="left:-2.4px">    <i class="t">@Test</i></span></div><div class="cl" style="top:350.00px;left:20.8px">Run Test | Debug Test | <svg class="cli" width="9.4" height="9.4" viewBox="0 0 10 10"><rect x=".2" y=".2" width="9.6" height="9.6" rx="1.6" fill="#22b14c"/><path d="M2.2 5.2 L4.2 7.4 L7.9 2.4" fill="none" stroke="#fff" stroke-width="1.5" stroke-linecap="round" stroke-linejoin="round"/></svg></div><div class="ln" style="top:364.35px"><span style="left:-2.4px">    <i class="k">public</i> <i class="t">void</i> <i class="f">shouldFindOwnersByLastName</i>() {</span></div><div class="ln" style="top:378.70px"><b class="ig" style="left:21.2px"></b><span style="left:-2.4px">        <i class="t">Collection</i>&lt;<i class="t">Owner</i>&gt; <i class="v">owners</i> = <i class="k">this</i>.<i class="v">owners</i>.<i class="f">findByLastName</i>(<i class="s">&quot;Davis&quot;</i>);</span></div><div class="ln" style="top:393.05px"><b class="ig" style="left:21.2px"></b><span style="left:-2.4px">        <i class="f">assertThat</i>(<i class="v">owners</i>.<i class="f">size</i>()).<i class="f">isEqualTo</i>(<i class="n">2</i>);</span></div><div class="ln" style="top:407.40px"><b class="ig" style="left:21.2px"></b><span style="left:-2.4px"></span></div><div class="ln" style="top:421.75px"><b class="ig" style="left:21.2px"></b><span style="left:-2.4px">        owners = <i class="k">this</i>.<i class="v">owners</i>.<i class="f">findByLastName</i>(<i class="s">&quot;Daviss&quot;</i>);</span></div><div class="ln" style="top:436.10px"><b class="ig" style="left:21.2px"></b><span style="left:-2.4px">        <i class="f">assertThat</i>(<i class="v">owners</i>.<i class="f">isEmpty</i>()).<i class="f">isTrue</i>();</span></div><div class="ln" style="top:450.45px"><span style="left:-2.4px">    }</span></div><div class="ln" style="top:464.80px"><span style="left:-2.4px"></span></div><div class="ln" style="top:479.15px"><span style="left:-2.4px">    <i class="t">@Test</i></span></div><div class="cl" style="top:493.50px;left:20.8px">Run Test | Debug Test | <svg class="cli" width="9.4" height="9.4" viewBox="0 0 10 10"><path d="M1.4 1.4 L8.6 8.6 M8.6 1.4 L1.4 8.6" stroke="#e81123" stroke-width="2.1" stroke-linecap="round"/></svg></div><div class="ln" style="top:507.85px"><span style="left:-2.4px">    <i class="k">public</i> <i class="t">void</i> <i class="f">shouldFindSingleOwnerWithPet</i>() {</span></div><div class="ln" style="top:522.20px"><b class="ig" style="left:21.2px"></b><span style="left:-2.4px">        <i class="t">Owner</i> <i class="v">owner</i> = <i class="k">this</i>.<i class="v">owners</i>.<i class="f">findById</i>(<i class="n">1</i>);</span></div><div class="ln" style="top:536.55px"><b class="ig" style="left:21.2px"></b><span style="left:-2.4px">        <i class="f">assertThat</i>(<i class="v">owner</i>.<i class="f">getLastName</i>()).<i class="f">startsWith</i>(<i class="s">&quot;Franklin&quot;</i>);</span></div><div class="ln" style="top:550.90px"><b class="ig" style="left:21.2px"></b><span style="left:-2.4px">        <i class="f">assertThat</i>(<i class="v">owner</i>.<i class="f">getPets</i>().<i class="f">size</i>()).<i class="f">isEqualTo</i>(<i class="n">1</i>);</span></div><div class="ln" style="top:565.25px"><b class="ig" style="left:21.2px"></b><span style="left:-2.4px">        <i class="f">assertThat</i>(<i class="v">owner</i>.<i class="f">getPets</i>().<i class="f">get</i>(<i class="n">0</i>).<i class="f">getType</i>()).<i class="f">isNotNull</i>();</span></div><div class="ln" style="top:579.60px"><b class="selr" style="left:423.5px;width:57.6px"></b><b class="cur" style="left:423.1px"></b><b class="ig" style="left:21.2px"></b><span style="left:-2.4px">        <i class="f">assertThat</i>(<i class="v">owner</i>.<i class="f">getPets</i>().<i class="f">get</i>(<i class="n">0</i>).<i class="f">getType</i>().<i class="f">getName</i>()).<i class="f">isEqualTo</i>(<i class="s">&quot;wrong-name&quot;</i>);</span></div><div class="ln" style="top:593.95px"><span style="left:-2.4px">    }</span></div><div class="ln" style="top:608.30px"><span style="left:-2.4px"></span></div><div class="ln" style="top:622.65px"><span style="left:-2.4px">    <i class="t">@Test</i></span></div><div class="ln" style="top:637.00px"><span style="left:-2.4px">    <i class="t">@Transactional</i></span></div><div class="cl" style="top:651.35px;left:20.8px">Run Test | Debug Test | <svg class="cli" width="9.4" height="9.4" viewBox="0 0 10 10"><rect x=".2" y=".2" width="9.6" height="9.6" rx="1.6" fill="#22b14c"/><path d="M2.2 5.2 L4.2 7.4 L7.9 2.4" fill="none" stroke="#fff" stroke-width="1.5" stroke-linecap="round" stroke-linejoin="round"/></svg></div><div class="ln" style="top:665.70px"><span style="left:-2.4px">    <i class="k">public</i> <i class="t">void</i> <i class="f">shouldInsertOwner</i>() {</span></div><div class="ln" style="top:680.05px"><b class="ig" style="left:21.2px"></b><span style="left:-2.4px">        <i class="t">Collection</i>&lt;<i class="t">Owner</i>&gt; <i class="v">owners</i> = <i class="k">this</i>.<i class="v">owners</i>.<i class="f">findByLastName</i>(<i class="s">&quot;Schultz&quot;</i>);</span></div><div class="ln" style="top:694.40px"><b class="ig" style="left:21.2px"></b><span style="left:-2.4px">        <i class="t">int</i> <i class="v">found</i> = <i class="v">owners</i>.<i class="f">size</i>();</span></div><div class="ln" style="top:708.75px"><b class="ig" style="left:21.2px"></b><span style="left:-2.4px"></span></div><div class="ln" style="top:723.10px"><b class="ig" style="left:21.2px"></b><span style="left:-2.4px">        <i class="t">Owner</i> <i class="v">owner</i> = <i class="p">new</i> <i class="f">Owner</i>();</span></div><div class="ln" style="top:737.45px"><b class="ig" style="left:21.2px"></b><span style="left:-2.4px">        <i class="v">owner</i>.<i class="f">setFirstName</i>(<i class="s">&quot;Sam&quot;</i>);</span></div><div class="ln" style="top:751.80px"><b class="ig" style="left:21.2px"></b><span style="left:-2.4px">        <i class="v">owner</i>.<i class="f">setLastName</i>(<i class="s">&quot;Schultz&quot;</i>);</span></div></div><div class="num" style="top:-8.75px">64</div><div class="num" style="top:5.60px">65</div><div class="num" style="top:19.95px">66</div><div class="num" style="top:34.30px">67</div><div class="num" style="top:48.65px">68</div><div class="num" style="top:63.00px">69</div><div class="num" style="top:77.35px">70</div><div class="num" style="top:91.70px">71</div><div class="num" style="top:106.05px">72</div><div class="num" style="top:134.75px">73</div><div class="num" style="top:149.10px">74</div><div class="num" style="top:163.45px">75</div><div class="num" style="top:177.80px">76</div><div class="num" style="top:192.15px">77</div><div class="num" style="top:206.50px">78</div><div class="num" style="top:220.85px">79</div><div class="num" style="top:235.20px">80</div><div class="num" style="top:249.55px">81</div><div class="num" style="top:263.90px">82</div><div class="num" style="top:278.25px">83</div><div class="num" style="top:292.60px">84</div><div class="num" style="top:306.95px">85</div><div class="num" style="top:321.30px">86</div><div class="num" style="top:335.65px">87</div><div class="num" style="top:364.35px">88</div><div class="num" style="top:378.70px">89</div><div class="num" style="top:393.05px">90</div><div class="num" style="top:407.40px">91</div><div class="num" style="top:421.75px">92</div><div class="num" style="top:436.10px">93</div><div class="num" style="top:450.45px">94</div><div class="num" style="top:464.80px">95</div><div class="num" style="top:479.15px">96</div><div class="num" style="top:507.85px">97</div><div class="num" style="top:522.20px">98</div><div class="num" style="top:536.55px">99</div><div class="num" style="top:550.90px">100</div><div class="num" style="top:565.25px">101</div><div class="num nc" style="top:579.60px">102</div><div class="num" style="top:593.95px">103</div><div class="num" style="top:608.30px">104</div><div class="num" style="top:622.65px">105</div><div class="num" style="top:637.00px">106</div><div class="num" style="top:665.70px">107</div><div class="num" style="top:680.05px">108</div><div class="num" style="top:694.40px">109</div><div class="num" style="top:708.75px">110</div><div class="num" style="top:723.10px">111</div><div class="num" style="top:737.45px">112</div><div class="num" style="top:751.80px">113</div><div class="abs" style="left:0;top:0;width:564px;height:3.4px;background:linear-gradient(rgba(0,0,0,.62),rgba(0,0,0,0))"></div><div class="abs" style="left:563.4px;top:0;width:1px;height:755px;background:#2c2c2c"></div><div class="abs" style="left:564.2px;top:163px;width:10.8px;height:135px;background:#424242"></div><div class="abs" style="left:564.2px;top:265.2px;width:10.8px;height:1.8px;background:#8a8a8a"></div><div class="abs" style="left:55px;top:747.2px;width:504px;height:7.8px;background:rgba(121,121,121,.42)"></div></div><div class="abs" style="left:871px;top:30px;width:1px;height:783px;background:#444"></div>
<div id="rtabs"><div class="tab on" style="left:0;width:127px;color:#b8b8b8"><svg style="left:7.4px;top:7.2px" width="13.2" height="13.2" viewBox="0 0 16 16"><path d="M2.9 1.7 H9.4 L13 5.3 V14.5 H2.9 Z" fill="none" stroke="#d6d6d6" stroke-width="1.55" stroke-linejoin="round"/><path d="M9 1.6 L13.2 5.8 H9Z" fill="#d6d6d6"/></svg><span style="left:24.8px">Java Test Report</span><svg style="left:113.6px;top:11.2px" width="6.4" height="6.4" viewBox="0 0 7 7"><path d="M.9 .9 L6.1 6.1 M6.1 .9 L.9 6.1" stroke="#d8d8d8" stroke-width="1.5"/></svg></div><svg style="left:478.4px;top:11.8px" width="11.4" height="3.1" viewBox="0 0 11 3"><g fill="#f0f0f0"><circle cx="1.200" cy="1.500" r="1.2"/><circle cx="5.400" cy="1.500" r="1.2"/><circle cx="9.600" cy="1.500" r="1.2"/></g></svg></div><div id="rp"><div class="btn" style="left:11px;width:45.3px;background:#1a7c91"><span class="bl">All</span><span class="bb" style="width:14.1px">11</span></div><div class="btn" style="left:69px;width:57px;background:#dc3545"><span class="bl">Failed</span><span class="bb" style="width:9.9px">1</span></div><div class="btn" style="left:138.4px;width:67px;background:#28a745"><span class="bl">Passed</span><span class="bb" style="width:14.1px">10</span></div><div id="card"><div id="chead"><span>org.springframework.samples.petclinic.service.ClinicServiceTests</span></div></div><svg class="abs" style="left:13.6px;top:95.4px" width="6" height="8" viewBox="0 0 6 8"><path d="M.6 .4 L5.2 4 L.6 7.6Z" fill="#ddd"/></svg><div class="tn" style="top:107.2px">shouldFindOwnersByLastName</div><div class="tb" style="top:125.6px;width:36.8px;background:#28a745">Passed</div><div class="ms" style="top:139.6px">48ms</div><svg class="abs" style="left:13px;top:179.4px" width="8" height="6" viewBox="0 0 8 6"><path d="M.4 .8 H7.6 L4 5.2Z" fill="#ddd"/></svg><div class="tn" style="top:190px">shouldFindSingleOwnerWithPet</div><div class="tb" style="top:208.8px;width:31.2px;background:#dc3545">Failed</div><div class="ms" style="top:222.4px">22ms</div><div class="msg" style="top:242.6px">Message:</div><div class="msg" style="top:263.3px;letter-spacing:.19px">Expecting: &lt;"cat"&gt; to be equal to: &lt;"wrong-name"&gt; but was not.</div><div class="msg" style="top:281px;letter-spacing:.34px">Stack trace:</div><pre id="st">org.opentest4j.AssertionFailedError: 
Expecting:
 &lt;&quot;cat&quot;&gt;
to be equal to:
 &lt;&quot;wrong-name&quot;&gt;
but was not.
        at sun.reflect.NativeConstructorAccessorImpl.newInstance0(Native Method)
        at sun.reflect.NativeConstructorAccessorImpl.newInstance(NativeConstructorAccessorImpl.java:62)
        at sun.reflect.DelegatingConstructorAccessorImpl.newInstance(DelegatingConstructorAccessorImpl.java:45)
        at org.springframework.samples.petclinic.service.ClinicServiceTests.shouldFindSingleOwnerWithPet(ClinicServiceTests.java:102)
        at sun.reflect.NativeMethodAccessorImpl.invoke0(Native Method)
        at sun.reflect.NativeMethodAccessorImpl.invoke(NativeMethodAccessorImpl.java:62)
        at sun.reflect.DelegatingMethodAccessorImpl.invoke(DelegatingMethodAccessorImpl.java:43)
        at java.lang.reflect.Method.invoke(Method.java:498)
        at org.junit.runners.model.FrameworkMethod$1.runReflectiveCall(FrameworkMethod.java:50)
        at org.junit.internal.runners.model.ReflectiveCallable.run(ReflectiveCallable.java:12)
        at org.junit.runners.model.FrameworkMethod.invokeExplosively(FrameworkMethod.java:47)
        at org.junit.internal.runners.statements.InvokeMethod.evaluate(InvokeMethod.java:17)
        at org.springframework.test.context.junit4.statements.RunBeforeTestExecutionCallbacks.evaluate(RunBeforeTestExecutionCallbacks.java:73)
        at org.springframework.test.context.junit4.statements.RunAfterTestExecutionCallbacks.evaluate(RunAfterTestExecutionCallbacks.java:83)
        at org.springframework.test.context.junit4.statements.RunBeforeTestMethodCallbacks.evaluate(RunBeforeTestMethodCallbacks.java:75)
        at org.springframework.test.context.junit4.statements.RunAfterTestMethodCallbacks.evaluate(RunAfterTestMethodCallbacks.java:86)
        at org.springframework.test.context.junit4.statements.SpringRepeat.evaluate(SpringRepeat.java:84)
        at org.junit.runners.ParentRunner.runLeaf(ParentRunner.java:325)
        at org.springframework.test.context.junit4.SpringJUnit4ClassRunner.runChild(SpringJUnit4ClassRunner.java:251)
        at org.springframework.test.context.junit4.SpringJUnit4ClassRunner.runChild(SpringJUnit4ClassRunner.java:97)
        at org.junit.runners.ParentRunner$3.run(ParentRunner.java:290)
        at org.junit.runners.ParentRunner$1.schedule(ParentRunner.java:71)
        at org.junit.runners.ParentRunner.runChildren(ParentRunner.java:288)
        at org.junit.runners.ParentRunner.access$000(ParentRunner.java:58)
        at org.junit.runners.ParentRunner$2.evaluate(ParentRunner.java:268)
        at org.springframework.test.context.junit4.statements.RunBeforeTestClassCallbacks.evaluate(RunBeforeTestClassCallbacks.java:61)
        at org.springframework.test.context.junit4.statements.RunAfterTestClassCallbacks.evaluate(RunAfterTestClassCallbacks.java:70)
        at org.junit.runners.ParentRunner.run(ParentRunner.java:363)</pre><div class="abs" style="left:490px;top:0;width:8px;height:350px;background:#464646"></div></div>
<div id="status"><svg style="left:11.4px;top:3.4px" width="8.4" height="11.4" viewBox="0 0 8.4 11.4"><g fill="none" stroke="#fff" stroke-width="1"><circle cx="2" cy="1.9" r="1.3"/><circle cx="2" cy="9.5" r="1.3"/><circle cx="6.4" cy="3.4" r="1.3"/><path d="M2 3.2 V8.2 M6.4 4.7 C6.4 6.6 2 6 2 8" stroke-width="1.2"/></g></svg><span style="left:21.9px">master*</span><svg style="left:68.8px;top:4.0px" width="9.6" height="10" viewBox="0 0 9.6 10"><g fill="none" stroke="#fff" stroke-width="1.3"><path d="M1.2 4.4 A3.7 3.7 0 0 1 8 3"/><path d="M8.4 5.6 A3.7 3.7 0 0 1 1.6 7"/></g><path d="M8.9 .6 V3.9 H5.6Z M.7 9.4 V6.1 H4Z" fill="#fff"/></svg><svg style="left:87.4px;top:4.4px" width="9.2" height="9.2" viewBox="0 0 10 10"><circle cx="5" cy="5" r="4.9" fill="#fff"/><path d="M3 3 L7 7 M7 3 L3 7" stroke="#007acc" stroke-width="1.5"/></svg><span style="left:100.0px">0</span><svg style="left:109.4px;top:4.2px" width="9.6" height="9.4" viewBox="0 0 10 10"><path d="M5 .4 L9.8 9.4 H.2Z" fill="#fff" stroke="#fff" stroke-width=".4" stroke-linejoin="round"/><path d="M5 3.4 V6.4 M5 7.4 V8.4" stroke="#007acc" stroke-width="1.1"/></svg><span style="left:122.0px">11</span><svg style="left:140.8px;top:5.0px" width="7.6" height="7.6" viewBox="0 0 8 8"><path d="M.9 .9 L7.1 7.1 M7.1 .9 L.9 7.1" stroke="#fff" stroke-width="1.6"/></svg><span style="left:150.0px">1</span><svg style="left:158.0px;top:5.0px" width="9.2" height="7.8" viewBox="0 0 9.2 7.8"><path d="M.8 4.2 L3.4 6.8 L8.4 1" fill="none" stroke="#fff" stroke-width="1.5"/></svg><span style="left:169.8px">10</span><span style="left:945.5px">Ln 102, Col 75 (10 selected)</span><span style="left:1084.0px">Spaces: 4</span><span style="left:1140.8px">UTF-8</span><span style="left:1181.6px">LF</span><span style="left:1204.4px">Java</span><svg style="left:1236.2px;top:3.2px" width="11" height="11.6" viewBox="0 0 11 11.6"><path d="M1 5.6 H3.2 L5.6 .8 C7 .8 7.2 2 6.8 3 L6.2 4.6 H9.2 C10.2 4.6 10.4 5.6 9.8 6.2 C10.4 6.8 10 7.6 9.4 7.8 C9.8 8.6 9.4 9.2 8.8 9.4 C9 10.2 8.4 10.8 7.6 10.8 H3.6 L2.6 10 H1 Z" fill="none" stroke="#fff" stroke-width="1.1" stroke-linejoin="round"/></svg><svg style="left:1270.8px;top:4.2px" width="9.6" height="9.6" viewBox="0 0 10 10"><circle cx="5" cy="5" r="4.2" fill="none" stroke="#fff" stroke-width="1.25"/><path d="M5 4.3 V7.6 M3.9 4.5 H5 M3.9 7.500 H6.1" stroke="#fff" stroke-width="1.3"/><circle cx="5" cy="2.700" r=".85" fill="#fff"/></svg><svg style="left:1292.8px;top:3.6px" width="11.2" height="11.2" viewBox="0 0 12 12"><circle cx="6" cy="6" r="5.8" fill="#fff"/><circle cx="4" cy="4.4" r="1" fill="#007acc"/><circle cx="8" cy="4.4" r="1" fill="#007acc"/><path d="M2.8 6.8 C3.6 10.4 8.4 10.4 9.2 6.8" fill="none" stroke="#007acc" stroke-width="1.1"/></svg><svg style="left:1316.8px;top:3.6px" width="10.8" height="11.4" viewBox="0 0 10.8 11.4"><path d="M5.4 .6 C3 .6 2.4 2.6 2.4 4.6 C2.4 7 1.4 7.8 .4 8.6 V9.2 H10.4 V8.6 C9.4 7.8 8.4 7 8.4 4.6 C8.4 2.6 7.8 .6 5.4 .6Z M4.2 9.8 A1.3 1.3 0 0 0 6.6 9.8Z" fill="#fff"/></svg></div>
</div>
</body></html>
